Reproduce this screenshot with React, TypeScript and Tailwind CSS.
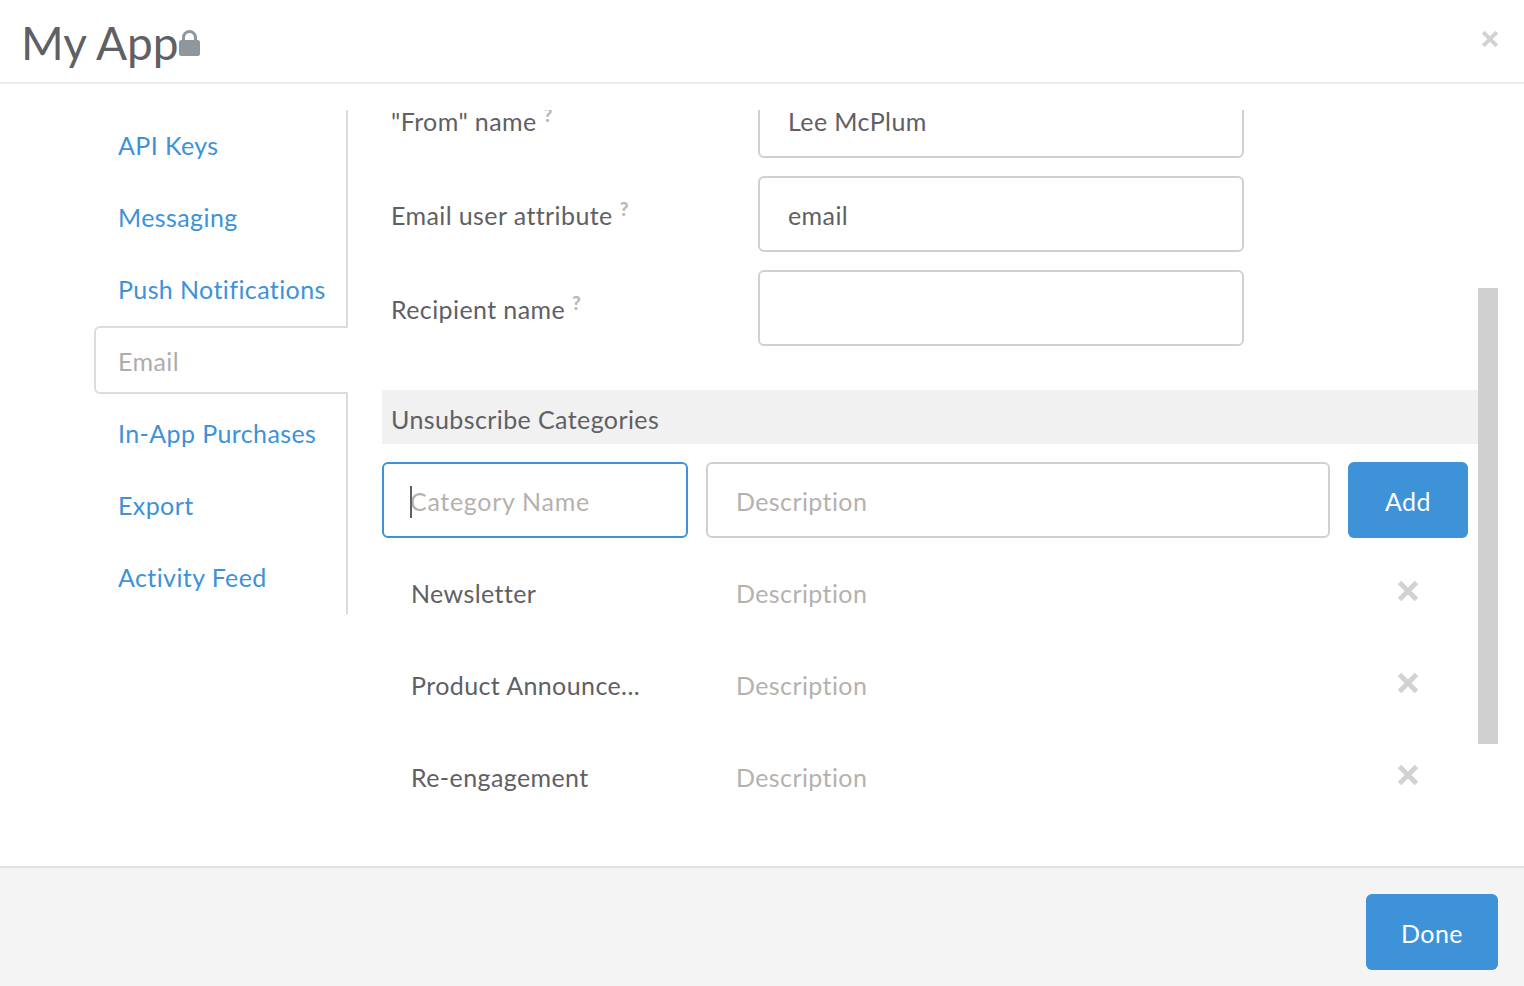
import React from 'react';

const FONT = "font-['Lato','Open_Sans',sans-serif]";

const Cross = ({ className }: { className: string }) => (
  <svg viewBox="0 0 20 20" className={className} fill="none" stroke="currentColor" strokeWidth="5">
    <path d="M1.5 1.5L18.5 18.5M18.5 1.5L1.5 18.5" />
  </svg>
);

const Lock = () => (
  <svg viewBox="0 0 21 26" className="mt-[4px] h-[26px] w-[21px] shrink-0 text-[#8e979b]">
    <path d="M4.5 12V7.5a6 6 0 0 1 12 0V12" fill="none" stroke="currentColor" strokeWidth="3" />
    <rect x="0" y="10" width="21" height="16" rx="2.5" fill="currentColor" />
  </svg>
);

const navTop = ['API Keys', 'Messaging', 'Push Notifications'];
const navBottom = ['In-App Purchases', 'Export', 'Activity Feed'];

const NavLink = ({ label }: { label: string }) => (
  <a className="flex h-[72px] items-center pl-[24px] text-[#3d92d8]">{label}</a>
);

const Field = ({ label, value }: { label: string; value: string }) => (
  <div className="flex items-center">
    <div className="w-[376px] pl-[9px] pt-[4px]">
      {label}
      <span className="relative top-[-9px] ml-[7px] text-[19px] leading-none font-black text-[#bbb8b5]">?</span>
    </div>
    <input
      readOnly
      value={value}
      className="h-[76px] w-[486px] rounded-[6px] border-2 border-[#d0d0d0] bg-white px-[28px] pt-[2px] outline-none"
    />
  </div>
);

const categories = ['Newsletter', 'Product Announce...', 'Re-engagement'];

export default function App() {
  return (
    <div className={`flex h-screen flex-col overflow-hidden bg-white text-[25px] tracking-[0.4px] text-[#5f6064] ${FONT}`}>
      {/* Header */}
      <header className="flex h-[84px] shrink-0 items-center justify-between border-b-2 border-[#ebebeb] pl-[21px] pr-[26px]">
        <div className="flex items-center">
          <h1 className="pt-[4px] text-[46px] leading-none tracking-normal">My App</h1>
          <Lock />
        </div>
        <Cross className="mb-[4px] h-[16px] w-[16px] text-[#d2d2d2]" />
      </header>

      {/* Body */}
      <div className="flex min-h-0 flex-1 pt-[26px]">
        <nav className="ml-[94px] h-[504px] w-[254px] shrink-0">
          <div className="border-r-2 border-[#dcdcdc]">
            {navTop.map((n) => (
              <NavLink key={n} label={n} />
            ))}
          </div>
          <div className="flex h-[68px] items-center rounded-l-[6px] border-y-2 border-l-2 border-[#dcdcdc] pl-[22px] pt-[3px] text-[#b0aca8]">
            Email
          </div>
          <div className="border-r-2 border-[#dcdcdc] pt-[4px]">
            {navBottom.map((n) => (
              <NavLink key={n} label={n} />
            ))}
          </div>
        </nav>

        <main className="relative min-w-0 flex-1 overflow-hidden pl-[34px]">
          <div className="mt-[-28px] w-[1096px]">
            <div className="flex flex-col gap-[18px]">
              <Field label={'"From" name'} value="Lee McPlum" />
              <Field label="Email user attribute" value="email" />
              <Field label="Recipient name" value="" />
            </div>

            <div className="mt-[44px] flex h-[54px] items-center bg-[#f1f1f1] pl-[9px] pt-[5px]">Unsubscribe Categories</div>

            <div className="mt-[18px] flex gap-[18px]">
              <div className="relative">
                <input
                  readOnly
                  placeholder="Category Name"
                  className="h-[76px] w-[306px] rounded-[6px] border-2 border-[#3d92d8] bg-white px-[26px] pt-[2px] tracking-[0.7px] outline-none placeholder:text-[#b5b2ae]"
                />
                <span className="absolute left-[28px] top-[24px] h-[32px] w-[2px] bg-[#5f6064]" />
              </div>
              <input
                readOnly
                placeholder="Description"
                className="h-[76px] w-[624px] rounded-[6px] border-2 border-[#d0d0d0] bg-white px-[28px] pt-[2px] outline-none placeholder:text-[#b5b2ae]"
              />
              <button className="h-[76px] w-[120px] rounded-[6px] bg-[#3d92d8] pt-[3px] text-white">Add</button>
            </div>

            <div className="mt-[10px]">
              {categories.map((c) => (
                <div key={c} className="flex h-[92px] items-center">
                  <div className="w-[354px] pl-[29px]">{c}</div>
                  <div className="w-[662px] text-[#b5b2ae]">Description</div>
                  <Cross className="mb-[6px] h-[20px] w-[20px] text-[#d2d2d2]" />
                </div>
              ))}
            </div>
          </div>

          {/* scrollbar */}
          <div className="absolute right-[26px] top-[178px] h-[456px] w-[20px] bg-[#d0d0d0]" />
        </main>
      </div>

      {/* Footer */}
      <footer className="flex h-[120px] shrink-0 justify-end border-t-2 border-[#e2e2e2] bg-[#f4f4f4] pr-[26px] pt-[26px]">
        <button className="h-[76px] w-[132px] rounded-[6px] bg-[#3d92d8] pt-[3px] text-white">Done</button>
      </footer>
    </div>
  );
}
